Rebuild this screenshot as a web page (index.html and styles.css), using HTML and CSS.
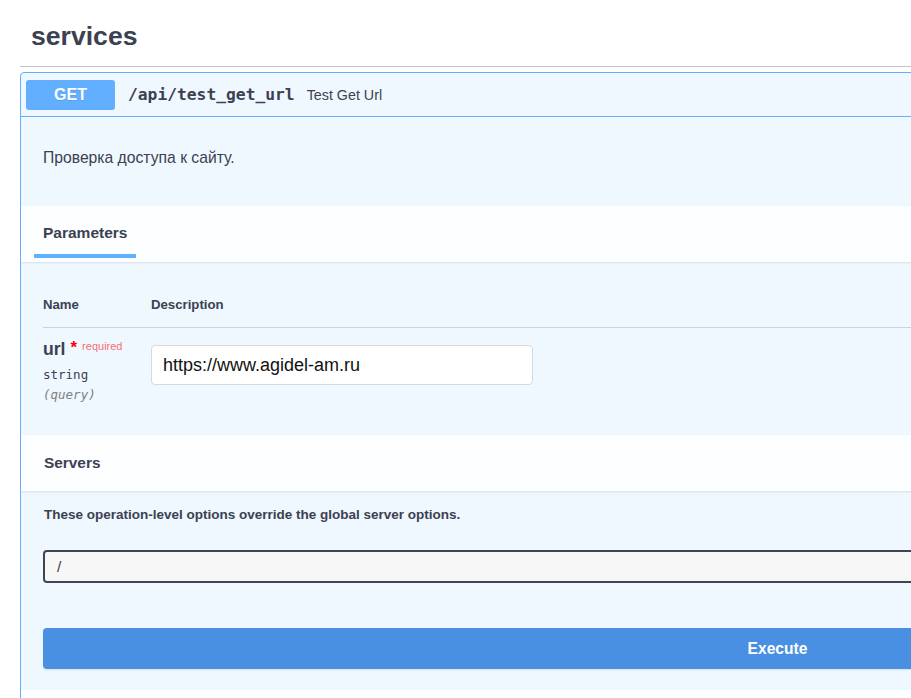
FILE: index.html
```html
<!DOCTYPE html>
<html lang="en">
<head>
<meta charset="utf-8">
<title>services</title>
<link rel="stylesheet" href="styles.css">
</head>
<body>
<div class="wrapper">
  <h3 class="tag">services</h3>
  <div class="opblock">
    <div class="summary">
      <span class="method">GET</span>
      <span class="path">/api/test_get_url</span>
      <span class="summary-desc">Test Get Url</span>
    </div>
    <div class="description">
      <p>Проверка доступа к сайту.</p>
    </div>
    <div class="section-header tabs">
      <div class="tab">Parameters</div>
    </div>
    <div class="params">
      <div class="params-head">
        <div class="col-name">Name</div>
        <div class="col-desc">Description</div>
      </div>
      <div class="params-row">
        <div class="col-name">
          <div class="pname">url<span class="star">*</span><span class="req">required</span></div>
          <div class="ptype">string</div>
          <div class="pin">(query)</div>
        </div>
        <div class="col-desc">
          <div class="input">https://www.agidel-am.ru</div>
        </div>
      </div>
    </div>
    <div class="section-header servers-head">
      <div class="section-title">Servers</div>
    </div>
    <div class="servers">
      <div class="servers-note">These operation-level options override the global server options.</div>
      <div class="select">/</div>
      <div class="execute">Execute</div>
    </div>
    <div class="section-header responses-head"></div>
  </div>
</div>
</body>
</html>
```
FILE: styles.css
```css
html, body {
  margin: 0;
  padding: 0;
  overflow: hidden;
  background: #fff;
  height: 698px;
}
body {
  font-family: "Liberation Sans", Arial, sans-serif;
  color: #3b4151;
}
.wrapper {
  width: 1514px;
  padding: 0 20px;
}
.tag {
  margin: 0;
  padding: 20px 0 14px 11px;
  font-size: 26.6px;
  line-height: 32px;
  font-weight: bold;
  border-bottom: 1px solid rgba(59, 65, 81, 0.3);
}
.opblock {
  margin-top: 5px;
  border: 1px solid #61affe;
  border-radius: 4px;
  background: #eff7ff;
  height: 700px;
  overflow: hidden;
}
.summary {
  display: flex;
  align-items: center;
  height: 43px;
  padding: 0 5px;
  border-bottom: 1px solid #61affe;
}
.method {
  width: 89px;
  height: 30px;
  line-height: 30px;
  text-align: center;
  background: #61affe;
  color: #fff;
  font-weight: bold;
  font-size: 16px;
  border-radius: 3px;
  text-shadow: 0 1px 0 rgba(0,0,0,.1);
}
.path {
  margin-left: 13px;
  font-family: "DejaVu Sans Mono", "Liberation Mono", monospace;
  font-weight: bold;
  font-size: 16.3px;
  color: #3b4151;
}
.summary-desc {
  margin-left: 12px;
  font-size: 14.3px;
  color: #3b4151;
}
.description {
  padding: 31px 22px 38px;
}
.description p {
  margin: 0;
  font-size: 15.7px;
  line-height: 20px;
}
.section-header {
  background: rgba(255, 255, 255, 0.8);
  box-shadow: 0 1px 2px rgba(0, 0, 0, 0.1);
  position: relative;
}
.tabs {
  height: 56px;
  box-sizing: border-box;
  padding: 17px 0 0 13px;
}
.tab {
  display: inline-block;
  padding: 0 9px 11px;
  border-bottom: 4px solid #61affe;
  font-size: 15.5px;
  line-height: 20px;
  font-weight: bold;
}
.params {
  padding: 0 0 30px 22px;
}
.params-head {
  display: flex;
  padding: 35px 0 14px;
  border-bottom: 1px solid rgba(59, 65, 81, 0.2);
  font-size: 13.2px;
  line-height: 16px;
  font-weight: bold;
}
.col-name {
  width: 108px;
  flex: none;
}
.params-row {
  display: flex;
  padding-top: 11px;
}
.pname {
  font-size: 17.6px;
  line-height: 20px;
  font-weight: bold;
}
.star {
  color: red;
  font-size: 17px;
  position: relative;
  top: -2px;
  margin-left: 5px;
  font-weight: bold;
}
.req {
  color: rgba(255, 0, 0, 0.6);
  font-size: 11px;
  font-weight: normal;
  position: relative;
  top: -5px;
  margin-left: 5px;
}
.ptype {
  margin-top: 4px;
  font-family: "DejaVu Sans Mono", "Liberation Mono", monospace;
  font-size: 12.5px;
  line-height: 20px;
  color: #3b4151;
}
.pin {
  font-family: "DejaVu Sans Mono", "Liberation Mono", monospace;
  font-style: italic;
  font-size: 12.5px;
  line-height: 20px;
  color: #808080;
}
.col-desc {
  flex: none;
}
.input {
  margin-top: 6px;
  width: 382px;
  height: 40px;
  box-sizing: border-box;
  border: 1px solid #d9d9d9;
  border-radius: 4px;
  background: #fff;
  padding-left: 11px;
  line-height: 38px;
  font-size: 18px;
  color: #111;
}
.servers-head {
  height: 56px;
  display: flex;
  align-items: center;
  padding-left: 23px;
}
.section-title {
  font-size: 15.4px;
  font-weight: bold;
}
.servers {
  padding: 16px 21px 21px 22px;
}
.servers-note {
  padding-left: 1px;
  font-size: 13.5px;
  line-height: 16px;
  font-weight: bold;
}
.select {
  margin-top: 27px;
  height: 33px;
  box-sizing: border-box;
  border: 2px solid #41444e;
  border-radius: 4px;
  background: #f7f7f7;
  padding-left: 12px;
  line-height: 29px;
  font-size: 15.4px;
  color: #3b4151;
}
.execute {
  margin-top: 45px;
  height: 41px;
  line-height: 41px;
  text-align: center;
  background: #4990e2;
  color: #fff;
  border-radius: 4px;
  font-size: 15.6px;
  font-weight: bold;
  box-shadow: 0 1px 2px rgba(0, 0, 0, 0.1);
}
.responses-head {
  height: 56px;
  box-shadow: none;
}
```
